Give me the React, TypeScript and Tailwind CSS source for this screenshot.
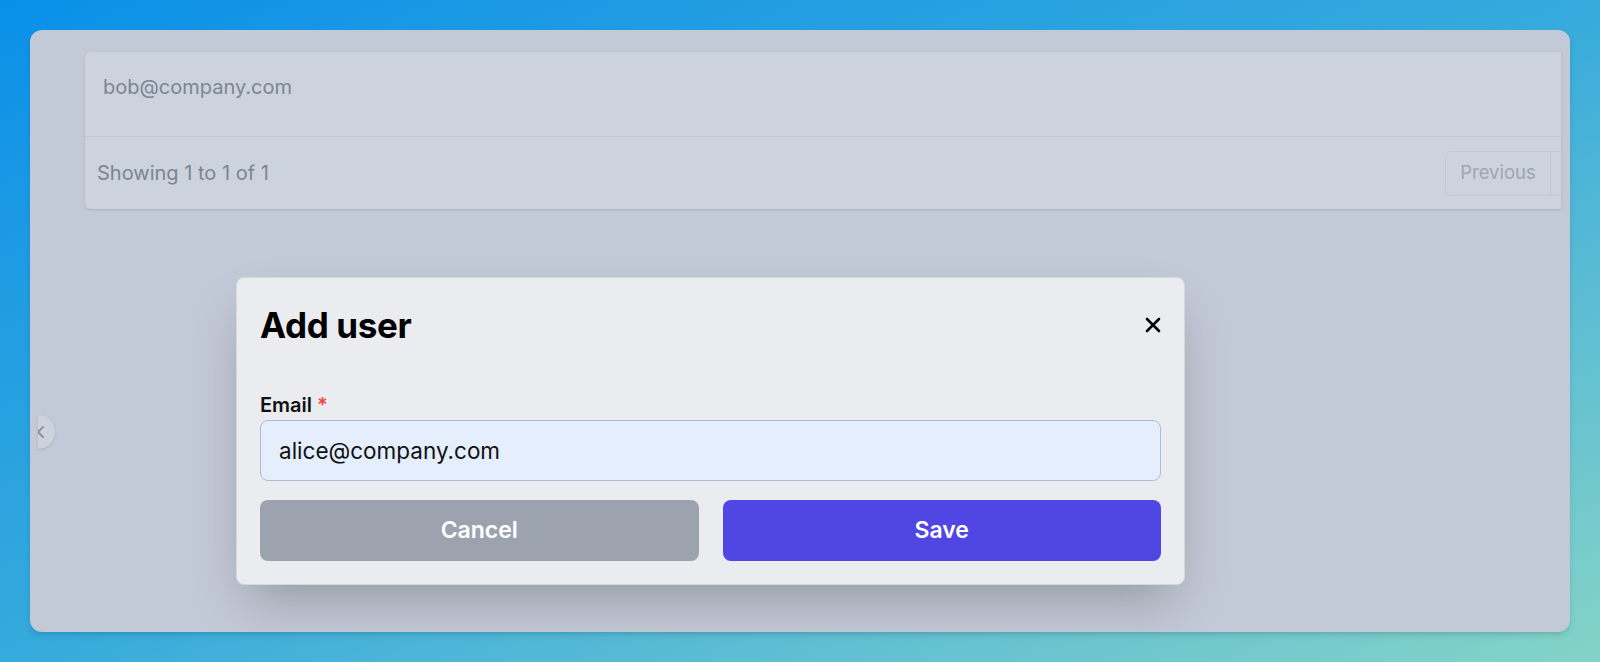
import { useState } from "react";

export default function App() {
  const [email, setEmail] = useState("alice@company.com");

  return (
    <div className="h-[662px] w-full bg-linear-to-br from-[#0790e8] via-[#35aadc] to-[#84d3c6] p-[30px] font-['Inter',sans-serif]">
      <div className="relative h-full overflow-hidden rounded-[12px] bg-[#c3cad7] shadow-md">
        {/* users table behind the overlay */}
        <div className="pl-[55px] pt-[22px]">
          <div className="w-[1476px] overflow-hidden rounded-l-md bg-[#ccd3dd] shadow-sm">
            <div className="w-[1556px]">
              <div className="h-[85px] border-b border-[#c2c9d4] pl-[18px] pt-[21px] text-[20px] leading-[28px] text-[#7d8594]">
                bob@company.com
              </div>
              <div className="flex h-[72px] items-center justify-between pl-[12px]">
                <span className="text-[20px] text-[#7d8594]">Showing 1 to 1 of 1</span>
                <div className="flex">
                  <button className="h-[45px] w-[106px] rounded-l-md border border-[#c2c9d4] text-[18.5px] text-[#9ea5b1]">
                    Previous
                  </button>
                  <button aria-label="Next" className="h-[45px] w-[90px] rounded-r-md border border-l-0 border-[#c2c9d4]" />
                </div>
              </div>
            </div>
          </div>
        </div>

        {/* sidebar toggle peeking out */}
        <div className="absolute left-[8px] top-[385px] h-[34px] w-[17px] overflow-hidden rounded-r-full bg-[#cdd3dd] shadow-sm">
          <svg className="absolute -left-[5px] top-[9px]" width="16" height="16" viewBox="0 0 16 16" fill="none">
            <path d="M10 3 L5 8 L10 13" stroke="#8a919d" strokeWidth="2" strokeLinecap="round" strokeLinejoin="round" />
          </svg>
        </div>

        {/* modal */}
        <div className="absolute left-[206px] top-[247px] w-[949px] rounded-lg border border-[#d3d7de] bg-[#ebecf0] px-[23px] pb-[23px] pt-[26px] shadow-2xl">
          <div className="flex h-[42px] items-center justify-between">
            <h2 className="text-[35px] font-bold leading-[42px] tracking-[-0.01em] text-black">Add user</h2>
            <button className="text-black">
              <svg width="16" height="16" viewBox="0 0 16 16" fill="none">
                <path d="M2 2 L14 14 M14 2 L2 14" stroke="currentColor" strokeWidth="2.6" strokeLinecap="round" />
              </svg>
            </button>
          </div>

          <label className="mt-[47px] block text-[20px] font-semibold leading-[24px] text-[#111]">
            Email <span className="text-[#ef4444]">*</span>
          </label>
          <input
            value={email}
            onChange={(e) => setEmail(e.target.value)}
            className="mt-[3px] block h-[61px] w-full rounded-[8px] border border-[#aebbd0] bg-[#e5eefd] pl-[18px] text-[22.5px] text-[#111] outline-none"
          />

          <div className="mt-[19px] grid h-[61px] grid-cols-2 gap-6">
            <button className="rounded-[8px] bg-[#9ca3af] text-[23px] font-semibold text-white">Cancel</button>
            <button className="rounded-[8px] bg-[#5046e4] text-[23px] font-semibold text-white">Save</button>
          </div>
        </div>
      </div>
    </div>
  );
}
